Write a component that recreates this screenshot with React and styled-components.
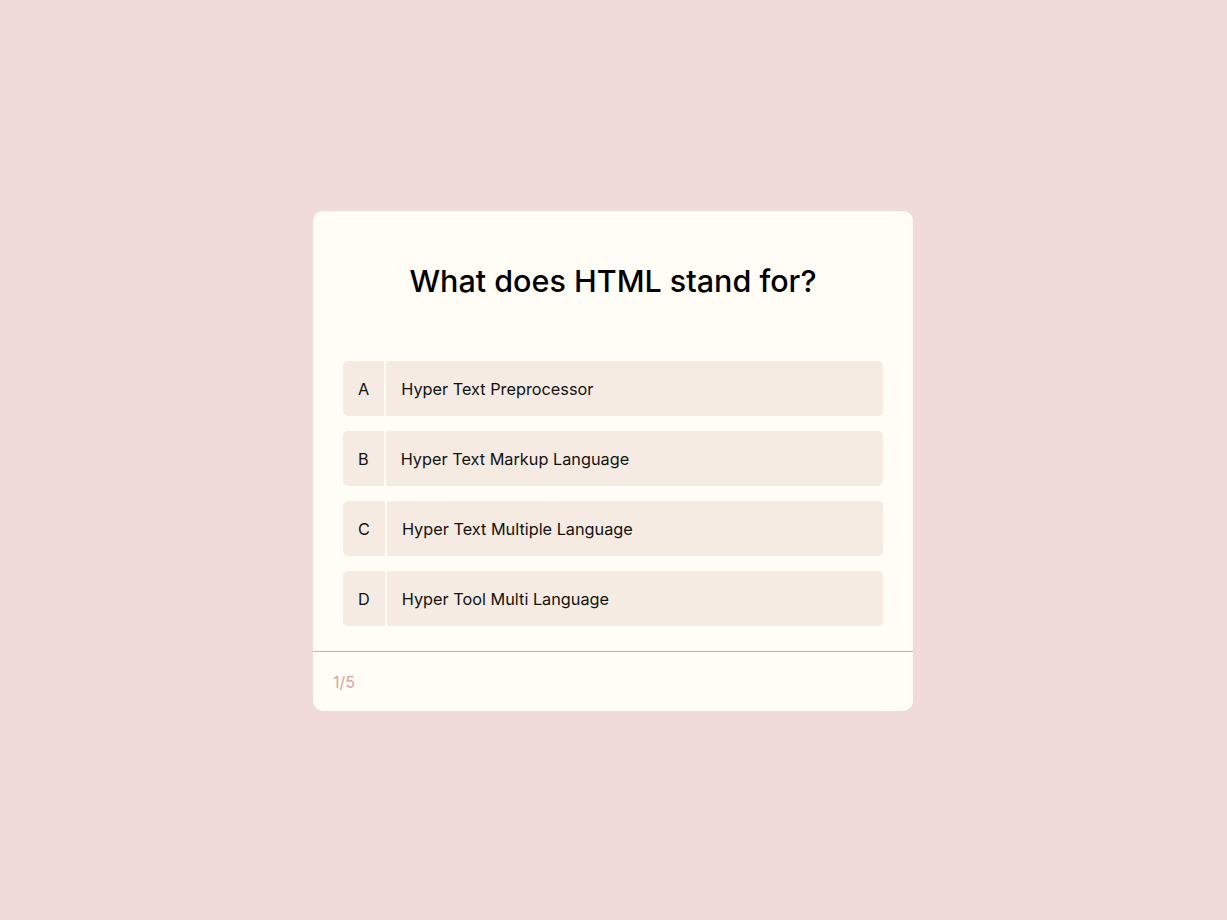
import React from "react";
import styled, { createGlobalStyle } from "styled-components";

const Global = createGlobalStyle`
  html, body { margin: 0; padding: 0; }
  body {
    background: #f0dbda;
    font-family: Inter, "Open Sans", sans-serif;
    color: #000;
  }
`;

const Page = styled.main`
  min-height: 920px;
  box-sizing: border-box;
  padding: 2px 1px 0 0;
  display: flex;
  align-items: center;
  justify-content: center;
`;

const Card = styled.section`
  width: 600px;
  height: 500px;
  background: #fffdf5;
  border-radius: 10px;
  display: flex;
  flex-direction: column;
  overflow: hidden;
`;

const Body = styled.div`
  flex: 1;
  padding: 47px 30px 25px;
  display: flex;
  flex-direction: column;
`;

const Question = styled.h2`
  margin: 0 0 58px;
  font-size: 30.5px;
  line-height: 45px;
  font-weight: 500;
  text-align: center;
  color: #000;
`;

const Options = styled.ul`
  list-style: none;
  margin: 0;
  padding: 0;
  display: flex;
  flex-direction: column;
  gap: 15px;
`;

const Option = styled.li`
  height: 55px;
  background: #f5ebe2;
  border-radius: 5px;
  display: flex;
  align-items: stretch;
  font-size: 16.3px;
  color: #111;
  cursor: pointer;
`;

const Letter = styled.span`
  display: flex;
  align-items: center;
  padding: 0 15px;
  border-right: 2px solid #fffdf5;
`;

const Answer = styled.span`
  display: flex;
  align-items: center;
  padding-left: 15px;
`;

const Footer = styled.footer`
  height: 59px;
  border-top: 1px solid #d2a9a1;
  display: flex;
  align-items: center;
  padding: 0 20px;
  font-size: 16px;
  color: #d9a59b;
`;

const options = [
  { l: "A", t: "Hyper Text Preprocessor" },
  { l: "B", t: "Hyper Text Markup Language" },
  { l: "C", t: "Hyper Text Multiple Language" },
  { l: "D", t: "Hyper Tool Multi Language" },
];

export default function App() {
  return (
    <>
      <Global />
      <Page>
        <Card>
          <Body>
            <Question>What does HTML stand for?</Question>
            <Options>
              {options.map((o) => (
                <Option key={o.l}>
                  <Letter>{o.l}</Letter>
                  <Answer>{o.t}</Answer>
                </Option>
              ))}
            </Options>
          </Body>
          <Footer>1/5</Footer>
        </Card>
      </Page>
    </>
  );
}
